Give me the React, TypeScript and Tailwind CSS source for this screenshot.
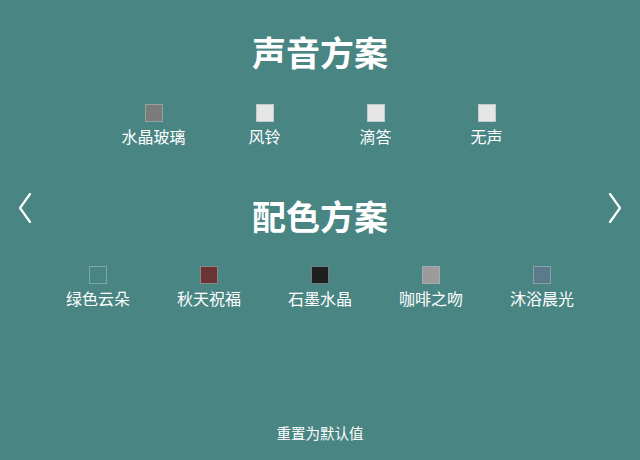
import React from 'react';

const sounds = [
  { name: '水晶玻璃', color: 'bg-[#7b7b7b]', active: true },
  { name: '风铃', color: 'bg-[#e6e6e6]' },
  { name: '滴答', color: 'bg-[#e6e6e6]' },
  { name: '无声', color: 'bg-[#e6e6e6]' },
];

const themes = [
  { name: '绿色云朵', color: 'bg-[#488583]' },
  { name: '秋天祝福', color: 'bg-[#6b3434]' },
  { name: '石墨水晶', color: 'bg-[#1e1f1f]' },
  { name: '咖啡之吻', color: 'bg-[#9c9a9a]' },
  { name: '沐浴晨光', color: 'bg-[#5b7a8c]' },
];

const Chevron: React.FC<{ dir: 'left' | 'right' }> = ({ dir }) => (
  <svg width="14" height="30" viewBox="0 0 14 30" className="block">
    <polyline
      points={dir === 'left' ? '12,1 2,15 12,29' : '2,1 12,15 2,29'}
      fill="none"
      stroke="white"
      strokeWidth="2.2"
      strokeLinecap="round"
      strokeLinejoin="round"
    />
  </svg>
);

const Option: React.FC<{ name: string; color: string }> = ({ name, color }) => (
  <div className="w-[111px] flex flex-col items-center">
    <div className={`w-[18px] h-[18px] border border-[#a9bdbc]/60 ${color}`} />
    <span className="mt-[6px] text-[16px] leading-[16px] text-white">{name}</span>
  </div>
);

export default function App() {
  return (
    <div
      className="w-[640px] h-[460px] bg-[#488583] flex flex-col items-center text-white"
      style={{ fontFamily: '"Noto Sans CJK SC", "Noto Sans", sans-serif' }}
    >
      {/* Sound scheme */}
      <h1 className="mt-[35px] text-[34px] leading-[34px] font-bold">声音方案</h1>
      <div className="mt-[35px] flex">
        {sounds.map((s) => (
          <Option key={s.name} name={s.name} color={s.color} />
        ))}
      </div>

      {/* Color scheme */}
      <div className="mt-[49px] w-full flex items-start justify-between px-[18px]">
        <button>
          <Chevron dir="left" />
        </button>
        <h1 className="mt-[6px] text-[34px] leading-[34px] font-bold">配色方案</h1>
        <button>
          <Chevron dir="right" />
        </button>
      </div>
      <div className="mt-[33px] flex">
        {themes.map((t) => (
          <Option key={t.name} name={t.name} color={t.color} />
        ))}
      </div>

      <button className="mt-auto mb-[20px] text-[14.5px] leading-[15px] text-white">重置为默认值</button>
    </div>
  );
}
